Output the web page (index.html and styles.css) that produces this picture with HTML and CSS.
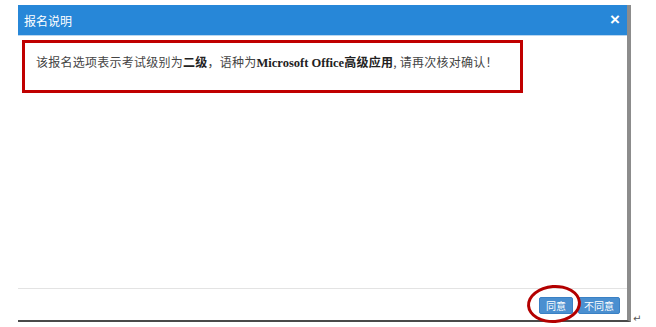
FILE: index.html
```html
<!DOCTYPE html>
<html lang="zh-CN">
<head>
    <meta charset="UTF-8">
    <title>报名说明</title>
    <link rel="stylesheet" href="styles.css">
</head>
<body>
    <div class="page">
        <div class="modal">
            <div class="modal-header">
                <span class="modal-title">报名说明</span>
                <span class="modal-close">&times;</span>
            </div>
            <div class="modal-body">
                <div class="notice">
                    <p>该报名选项表示考试级别为<b>二级</b>，语种为<b class="en">Microsoft Office</b><b>高级应用</b>, 请再次核对确认！</p>
                </div>
            </div>
            <div class="modal-footer">
                <span class="circled"><button class="btn">同意</button></span>
                <button class="btn">不同意</button>
            </div>
        </div>
        <span class="return-mark">↵</span>
    </div>
</body>
</html>
```
FILE: styles.css
```css
body {
    margin: 0;
    background: #fff;
    font-family: "Noto Sans CJK SC", "Liberation Sans", sans-serif;
}
.page {
    position: relative;
    width: 656px;
    height: 327px;
    padding: 5px 0 0 18px;
    box-sizing: border-box;
}
.modal {
    width: 613px;
    height: 317px;
    background: #fff;
    display: flex;
    flex-direction: column;
    border-right: 4px solid #8c8c8c;
    border-bottom: 2px solid #4a4a4a;
    box-sizing: border-box;
}
.modal-header {
    height: 30px;
    background: #2787d8;
    border-bottom: 1px solid #b9d6f0;
    display: flex;
    align-items: center;
    justify-content: space-between;
    padding: 0 7px 0 6px;
    color: #fff;
}
.modal-title {
    font-size: 12px;
    line-height: 1;
    margin-top: 1px;
}
.modal-close {
    font-family: "Liberation Sans", sans-serif;
    font-weight: bold;
    font-size: 17px;
    line-height: 1;
    margin-top: -1px;
}
.modal-body {
    flex: 1;
    padding: 4px 0 0 4px;
}
.notice {
    width: 501px;
    height: 53px;
    border: 3px solid #c00000;
    box-sizing: border-box;
    padding: 0 0 0 11px;
}
.notice p {
    margin: 0;
    padding-top: 12px;
    font-size: 12px;
    letter-spacing: 0.25px;
    color: #444;
    line-height: 1.2;
}
.notice b {
    color: #222;
}
.notice .en {
    font-family: "Liberation Serif", serif;
    font-size: 12.5px;
    letter-spacing: 0;
}
.modal-footer {
    height: 29px;
    border-top: 1px solid #e3e3e3;
    display: flex;
    align-items: center;
    justify-content: flex-end;
    gap: 5px;
    padding: 2px 7px 0 0;
}
.btn {
    height: 17px;
    padding: 0 5px;
    border: 1px solid #3a80c4;
    border-radius: 2px;
    background: #4a8fd0;
    color: #fff;
    font-family: "Noto Sans CJK SC", sans-serif;
    font-size: 10px;
    line-height: 1;
}
.circled {
    position: relative;
    display: inline-flex;
}
.circled .btn {
    width: 34px;
}
.circled::after {
    content: "";
    position: absolute;
    left: -12px;
    top: -12px;
    width: 54px;
    height: 38px;
    border: 3px solid #b30000;
    border-radius: 50%;
    box-sizing: border-box;
    transform: rotate(-4deg);
}
.return-mark {
    position: absolute;
    left: 633px;
    top: 313px;
    font-size: 10px;
    color: #555;
    font-family: "DejaVu Sans", sans-serif;
}
```
